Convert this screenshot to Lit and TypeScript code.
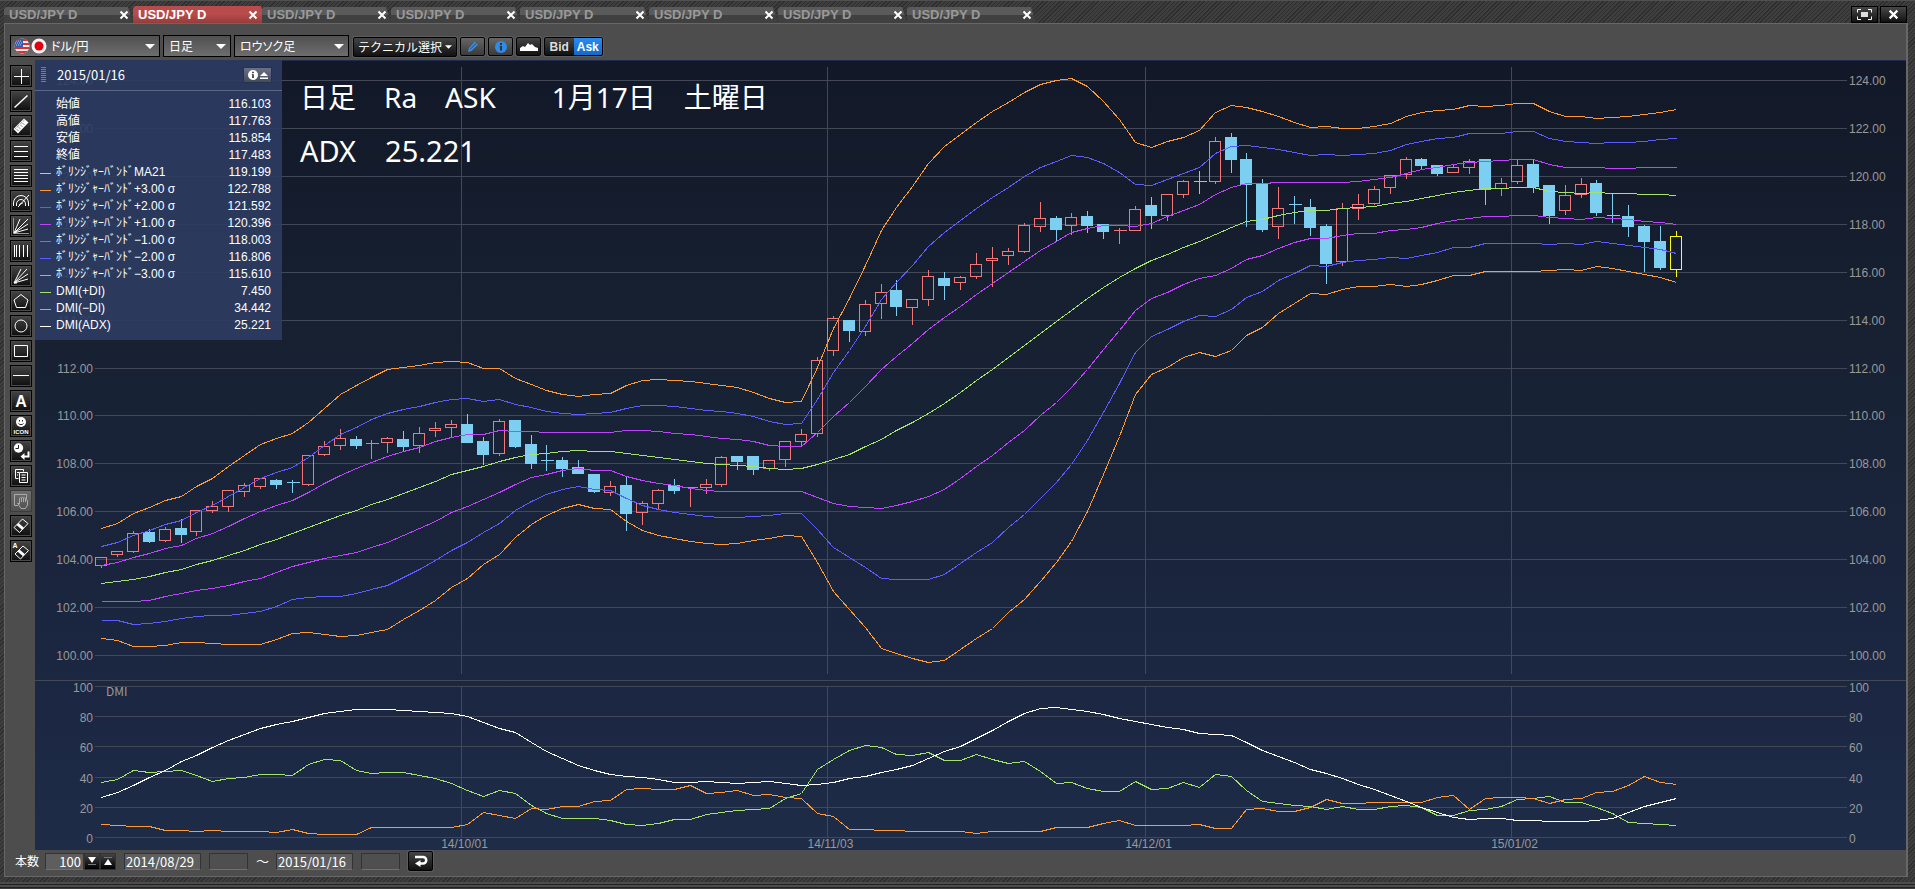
import { LitElement, html, svg, css } from "lit";
import { customElement, state } from "lit/decorators.js";

type Bar = [kind: number, top: number, bottom: number, high: number, low: number];

const UP = 1;
const DOWN = 0;
const shift = (by: number, list: number[]) => list.map((v) => v + by);
const shiftBars = (by: number, list: Bar[]): Bar[] =>
  list.map(([k, t, b, h, l]) => [k, t + by, b + by, h + by, l + by]);

/* Price levels are counted downwards in steps of 2/143.75 yen. */
const LEVEL_TOP = 61;
const LEVEL_SPAN = 1725;

const bars: Bar[] = [
  ...shiftBars(840, [
    [UP, 652, 677, 648, 683], [UP, 634, 644, 630, 650], [UP, 580, 635, 570, 638], [DOWN, 577, 603, 564, 606],
    [UP, 568, 602, 558, 605], [DOWN, 564, 582, 534, 608], [UP, 511, 575, 507, 587], [UP, 499, 512, 480, 518],
    [UP, 451, 500, 447, 513], [UP, 436, 455, 426, 470], [UP, 415, 440, 413, 446], [DOWN, 420, 432, 414, 444],
    [DOWN, 427, 428, 417, 456], [UP, 346, 434, 342, 437], [UP, 319, 344, 300, 347], [UP, 295, 317, 264, 329],
    [DOWN, 297, 315, 285, 324], [UP, 310, 311, 297, 354], [UP, 295, 308, 289, 338], [DOWN, 297, 318, 270, 333],
    [UP, 280, 317, 258, 338], [UP, 265, 272, 243, 290], [UP, 253, 263, 237, 288], [DOWN, 252, 306, 219, 308],
    [DOWN, 303, 342, 288, 372], [UP, 244, 341, 234, 347], [DOWN, 240, 318, 237, 323], [DOWN, 312, 369, 282, 384],
    [DOWN, 360, 361, 312, 390], [DOWN, 360, 384, 348, 408], [DOWN, 381, 399, 357, 399], [DOWN, 402, 453, 399, 458],
    [UP, 439, 458, 420, 467], [DOWN, 435, 519, 407, 570], [UP, 490, 518, 480, 552], [UP, 451, 491, 444, 504],
    [DOWN, 435, 450, 414, 459], [UP, 442, 443, 442, 498], [UP, 433, 443, 414, 459], [UP, 352, 434, 345, 438],
    [DOWN, 348, 363, 348, 387], [DOWN, 348, 387, 348, 402], [UP, 361, 386, 357, 392], [UP, 304, 359, 300, 378],
    [UP, 283, 305, 264, 318], [UP, 61, 281, 48, 288],
  ]),
  [UP, 775, 872, 765, 885], [DOWN, 780, 810, 780, 843], [UP, 733, 815, 717, 825], [UP, 697, 731, 669, 776],
  [DOWN, 690, 738, 657, 765], [UP, 718, 743, 714, 792], [UP, 649, 719, 627, 735], [DOWN, 654, 675, 633, 717],
  [UP, 652, 668, 645, 687], [UP, 613, 650, 576, 656], [UP, 595, 602, 558, 678], [UP, 574, 587, 561, 612],
  [UP, 496, 575, 487, 578], [UP, 475, 500, 423, 513], [DOWN, 474, 507, 465, 540], [UP, 472, 497, 456, 524],
  [DOWN, 468, 495, 450, 516], [DOWN, 492, 513, 492, 534], [UP, 511, 512, 501, 549], [UP, 448, 512, 435, 512],
  [DOWN, 435, 465, 408, 504], [UP, 403, 467, 399, 480], [UP, 364, 404, 357, 413], [DOWN, 364, 365, 330, 399],
  [UP, 244, 365, 228, 371], [DOWN, 231, 297, 216, 336], [DOWN, 297, 372, 276, 498], [DOWN, 370, 507, 354, 513],
  [UP, 445, 500, 378, 534], [DOWN, 433, 434, 405, 489], [DOWN, 441, 501, 414, 525], [DOWN, 498, 609, 489, 669],
  [UP, 445, 605, 426, 615], [UP, 433, 445, 399, 477], [UP, 388, 431, 375, 434], [UP, 346, 383, 342, 399],
  [UP, 298, 344, 288, 354], [DOWN, 297, 315, 291, 328], [DOWN, 315, 339, 312, 345], [UP, 322, 338, 313, 338],
  [UP, 304, 323, 294, 339], [DOWN, 297, 387, 297, 432], [UP, 370, 386, 351, 405], [UP, 316, 365, 294, 369],
  [DOWN, 312, 378, 299, 396], [DOWN, 375, 465, 375, 489], [UP, 406, 452, 372, 462], [UP, 373, 404, 351, 411],
  [DOWN, 369, 456, 357, 465], [DOWN, 466, 467, 399, 486], [DOWN, 468, 498, 432, 528], [DOWN, 498, 543, 492, 633],
  [DOWN, 543, 621, 495, 627], [UP, 529, 629, 510, 648],
];

const average = [
  ...shift(840, [
    730, 725, 719, 710, 698, 688, 674, 662, 647, 630, 614, 597, 580, 562, 543, 526, 511, 494, 478, 460, 443, 424,
    404, 391, 380, 364, 353, 343, 339, 334, 331, 334, 334, 340, 346, 352, 358, 364, 370, 374, 376, 379, 385, 387,
    386, 374, 359, 342, 320, 297, 272, 247,
  ]),
  1059, 1030, 996, 962, 929, 893, 857, 819, 785, 750, 716, 683, 653, 624, 602, 583, 562, 545, 524, 503, 485, 478,
  465, 458, 451, 451, 446, 442, 439, 431, 424, 415, 406, 397, 391, 386, 385, 382, 382, 393, 398, 400, 397, 399,
  401, 403, 404, 407,
];

const upperBand = [
  ...shift(840, [
    565, 550, 520, 501, 481, 468, 440, 415, 380, 346, 314, 296, 281, 248, 204, 162, 136, 112, 89, 83, 76, 68, 65,
    67, 86, 86, 115, 132, 151, 162, 169, 164, 159, 137, 122, 119, 121, 125, 130, 135, 142, 156, 175, 187, 183, 82,
  ]),
  805, 715, 617, 510, 443, 380, 310, 260, 223, 188, 154, 128, 96, 74, 62, 55, 79, 124, 178, 246, 262, 244, 231,
  212, 158, 136, 143, 154, 169, 187, 202, 199, 205, 205, 200, 190, 169, 157, 151, 148, 136, 139, 136, 130, 130,
  154, 169, 169, 175, 173, 169, 163, 157, 148,
];

/* DMI levels: 79 stands for 100, 532 for 0. */
const adx = [
  412, 397, 375, 353, 332, 305, 286, 261, 242, 223, 205, 193, 183, 171, 161, 153, 148, 148, 148, 151, 154, 157, 161,
  170, 188, 205, 218, 246, 275, 295, 316, 330, 342, 349, 352, 358, 366, 368, 365, 368, 370, 367, 364, 369, 376, 373,
  366, 356, 350, 338, 327, 315, 296, 274, 258, 234, 212, 185, 159, 146, 142, 148, 155, 164, 175, 184, 192, 201, 208,
  220, 223, 227, 246, 271, 289, 308, 327, 340, 356, 373, 389, 407, 425, 441, 458, 471, 478, 476, 475, 481, 481, 484,
  484, 484, 481, 474, 456, 439, 427, 415,
];
const plusDi = [
  367, 358, 331, 337, 334, 331, 347, 364, 355, 351, 344, 343, 346, 314, 298, 302, 330, 340, 337, 338, 345, 354, 369,
  391, 409, 391, 401, 436, 459, 475, 475, 475, 481, 493, 496, 491, 479, 478, 464, 458, 452, 448, 444, 416, 400, 329,
  297, 272, 256, 262, 283, 287, 277, 301, 301, 283, 297, 310, 305, 333, 370, 367, 386, 394, 394, 364, 388, 384, 367,
  382, 343, 349, 390, 424, 431, 435, 440, 448, 440, 449, 448, 439, 436, 441, 466, 466, 451, 448, 440, 418, 415, 409,
  427, 427, 442, 459, 487, 490, 493, 496,
];
const minusDi = [
  493, 496, 498, 500, 511, 511, 514, 511, 514, 514, 514, 517, 508, 519, 523, 523, 523, 502, 502, 502, 502, 502, 502,
  493, 457, 466, 475, 445, 448, 440, 439, 424, 421, 388, 386, 388, 388, 376, 400, 397, 390, 406, 403, 412, 416, 459,
  468, 508, 508, 511, 511, 514, 514, 514, 514, 520, 515, 514, 514, 514, 502, 502, 502, 491, 481, 496, 496, 496, 496,
  493, 505, 505, 449, 446, 454, 454, 443, 418, 430, 430, 428, 427, 427, 427, 412, 406, 448, 415, 412, 412, 415, 430,
  418, 415, 398, 393, 376, 349, 366, 373,
];

const months: [index: number, label: string][] = [
  [23, "14/10/01"], [46, "14/11/03"], [66, "14/12/01"], [89, "15/01/02"],
];

const ORANGE = "#ff9933";
const BLUE = "#5c5cff";
const PURPLE = "#c044ff";
const GREEN = "#a3e36a";

@customElement("price-chart")
class PriceChart extends LitElement {
  @state() private w = 1871;
  @state() private h = 790;
  private observer?: ResizeObserver;

  static styles = css`
    :host { display: block; min-width: 0; min-height: 0; overflow: hidden;
      background: linear-gradient(#121828, #172132 35%, #1b2641 75%, #1e2c47); box-shadow: inset 0 1px #1d2c4c; }
    svg { display: block; width: 100%; height: 100%; }
    .lines, .bars { shape-rendering: crispEdges; fill: none; stroke-width: 1; }
    .grid { stroke: #434857; shape-rendering: crispEdges; }
    .axis { fill: #999; font: 12px "Liberation Sans", sans-serif; }
    .end { text-anchor: end; }
    .mid { text-anchor: middle; }
    .title { font-family: "Noto Sans CJK JP", sans-serif; }
    .up { stroke: #f47676; }
    .down { stroke: #7ccff0; }
    .body { fill: #7ccff0; }
    .now { stroke: #ffff00; }
  `;

  connectedCallback() {
    super.connectedCallback();
    this.observer = new ResizeObserver(([entry]) => {
      this.w = Math.round(entry.contentRect.width);
      this.h = Math.round(entry.contentRect.height);
    });
    this.observer.observe(this);
  }

  disconnectedCallback() {
    this.observer?.disconnect();
    super.disconnectedCallback();
  }

  private x = (i: number) => Math.round(66 + (i * (this.w - 296)) / 99) + 0.5;
  private y = (level: number) => Math.floor(20.55 + ((level - LEVEL_TOP) / LEVEL_SPAN) * (this.h - 215)) + 0.5;
  private yd = (level: number) => Math.floor(this.h - 163.5 + ((level - 79) / 453) * 151) + 0.5;

  private line(levels: number[], color: string, scale: (v: number) => number) {
    return svg`<polyline stroke=${color} points=${levels.map((v, i) => `${this.x(i)},${scale(v)}`).join(" ")}></polyline>`;
  }

  private bar([kind, top, bottom, high, low]: Bar, i: number) {
    const x = this.x(i);
    const t = this.y(top);
    const b = this.y(bottom);
    const tone = i === bars.length - 1 ? "now" : kind === UP ? "up" : "down";
    const wicks = `M${x} ${this.y(high)}V${t}M${x} ${b}V${this.y(low) + 0.5}`;
    if (bottom - top < 2) {
      return svg`<path class=${tone} d=${`${wicks}M${x - 6} ${t}h13`}></path>`;
    }
    return svg`<path class=${tone} d=${wicks}></path>
      ${kind === UP
        ? svg`<rect class=${tone} x=${x - 6} y=${t} width="11" height=${b - t}></rect>`
        : svg`<rect class="body" x=${x - 6.5} y=${t - 0.5} width="12" height=${b - t + 1}></rect>`}`;
  }

  render() {
    const { w, h } = this;
    const right = w - 59;
    const band = (k: number) => average.map((m, i) => m + ((upperBand[i] - m) * k) / 3);
    const prices = Array.from({ length: 13 }, (_, i) => 124 - i * 2);
    const steps = [100, 80, 60, 40, 20, 0];
    const priceY = (p: number) => this.y(LEVEL_TOP + ((124 - p) / 24) * LEVEL_SPAN);
    const stepY = (v: number) => this.yd(532 - v * 4.53);
    return html`<svg viewBox="0 0 ${w} ${h}" role="img" aria-label="USD/JPY">
      ${prices.map((p) => svg`
        <path class="grid" d="M60 ${priceY(p)}H${right}"></path>
        <text class="axis end" x="58" y=${priceY(p) + 4.5}>${p.toFixed(2)}</text>
        <text class="axis" x=${right + 2} y=${priceY(p) + 4.5}>${p.toFixed(2)}</text>`)}
      ${steps.map((v) => svg`
        <path class="grid" d="M60 ${stepY(v)}H${right}"></path>
        <text class="axis end" x="58" y=${stepY(v) + 5.5}>${v}</text>
        <text class="axis" x=${right + 2} y=${stepY(v) + 5.5}>${v}</text>`)}
      <path class="grid" d="M0 ${h - 169.5}H${w}"></path>
      ${months.map(([i, label]) => svg`
        <path class="grid" d="M${this.x(i) - 6} 7V${h - 176}M${this.x(i) - 6} ${h - 163}v151"></path>
        <text class="axis mid" x=${this.x(i) - 3} y=${h - 2}>${label}</text>`)}
      <text class="axis title" x="71" y=${h - 154}>DMI</text>
      <g class="bars">${bars.map((b, i) => this.bar(b, i))}</g>
      <g class="lines">
        ${this.line(average, GREEN, this.y)}
        ${this.line(band(3), ORANGE, this.y)}
        ${this.line(band(-3), ORANGE, this.y)}
        ${this.line(band(2), BLUE, this.y)}
        ${this.line(band(-2), BLUE, this.y)}
        ${this.line(band(1), PURPLE, this.y)}
        ${this.line(band(-1), PURPLE, this.y)}
        ${this.line(plusDi, GREEN, this.yd)}
        ${this.line(minusDi, ORANGE, this.yd)}
        ${this.line(adx, "#fff", this.yd)}
      </g>
    </svg>`;
  }
}

const BAND = "ﾎﾞﾘﾝｼﾞｬｰﾊﾞﾝﾄﾞ";
const readings: [label: string, value: string, color: string][] = [
  ["始値", "116.103", "transparent"],
  ["高値", "117.763", "transparent"],
  ["安値", "115.854", "transparent"],
  ["終値", "117.483", "transparent"],
  [`${BAND}MA21`, "119.199", GREEN],
  [`${BAND}+3.00 σ`, "122.788", ORANGE],
  [`${BAND}+2.00 σ`, "121.592", BLUE],
  [`${BAND}+1.00 σ`, "120.396", PURPLE],
  [`${BAND}−1.00 σ`, "118.003", PURPLE],
  [`${BAND}−2.00 σ`, "116.806", BLUE],
  [`${BAND}−3.00 σ`, "115.610", ORANGE],
  ["DMI(+DI)", "7.450", GREEN],
  ["DMI(−DI)", "34.442", ORANGE],
  ["DMI(ADX)", "25.221", "#fff"],
];

const tools: [name: string, icon: unknown][] = [
  ["十字カーソル", svg`<path d="M4 11.5h15M11.5 4v15"/>`],
  ["トレンドライン", svg`<path d="M4.5 17.5l13-12" stroke-width="1.500"/>`],
  ["定規", svg`<path d="M3.500 14L14 3.500l4.500 4L8 18.500z" fill="#fff" stroke="none"/><path d="M7 14.500l1 1M9 12.500l1 1M11 10.500l1 1M13 8.500l1 1" stroke="#222"/><path d="M5.500 13.500L14.500 5" stroke="#555" stroke-dasharray="1 1"/>`],
  ["水平線3本", svg`<path d="M4 6.500h14M4 11.500h14M4 16.500h14"/>`],
  ["水平線5本", svg`<path d="M4 4.500h14M4 7.500h14M4 10.500h14M4 13.500h14M4 16.500h14"/>`],
  ["ファン弧", svg`<path d="M3.500 16v-3a7 7 0 0 1 15 0v3M6.500 16v-2a4.500 4.500 0 0 1 9 0v2M9.500 16v-1a2 2 0 0 1 3-1.500M8 17L19 5"/>`],
  ["ギャンファン", svg`<path d="M3.500 3v15.500H19" stroke="#999"/><path d="M4 18L10 4M4 18L18 4M4 18L18 9M4 18l14-4"/>`],
  ["垂直線", svg`<path d="M4.500 5v12M6.500 5v12M9.500 5v12M13.500 5v12M17.500 5v12"/>`],
  ["スピードライン", svg`<path d="M4 18L11 4M4 18L17 4M4 18l14-9M4 18l14-4M4 18h3"/>`],
  ["五角形", svg`<path d="M11 4.500l7 5.500-2.500 7.500h-9L4 10z"/>`],
  ["円", svg`<circle cx="11" cy="11" r="6"/>`],
  ["四角形", svg`<path d="M4.500 5.500h13v11h-13z"/>`],
  ["水平線", svg`<path d="M3 10.500h16"/>`],
  ["テキスト", svg`<text x="11" y="17" font-size="16" font-weight="bold">A</text>`],
  ["アイコン", svg`<circle cx="11" cy="7" r="5" fill="#fff" stroke="none"/><path d="M9.500 5v1.500M12.500 5v1.500M8.500 8.500c1 1.500 4 1.500 5 0" stroke="#222"/><text x="11" y="19" font-size="6" font-weight="bold">ICON</text>`],
  ["時間戻し", svg`<circle cx="8.500" cy="8" r="4.700" fill="#fff" stroke="none"/><path d="M8.500 5v3.500H5.500" stroke="#222"/><path d="M18.500 11.500v5H12" stroke-width="2"/><path d="M14.500 13l-4 3.500 4 3.500z" fill="#fff" stroke="none"/>`],
  ["複製", svg`<path d="M5.500 4.500h8v2M5.500 4.500v9h3M7 7.500h2M7 10h1M9.500 7.500h8v10h-8zM11.500 10h4M11.500 12.500h4M11.500 15h4"/>`],
  ["移動", svg`<path d="M8 15.500H4.500v-11h12v5M7.500 13l2 1V8.500c0-1 2-1 2 0V12V8c0-1 2-1 2 0v4V8.500c0-1 2-1 2 0V12v-1.500c0-1 2-1 2 0V15l-2 3.500h-4.500z" stroke="#aaa"/>`],
  ["消しゴム", svg`<path d="M4 12.500L12.500 4l5.500 4.500-8.500 9z"/><path d="M6.500 10l5.500 4.800 2-2L8.500 8z" fill="#fff" stroke="none"/>`],
  ["全消去", svg`<path d="M5 14L13 6l5.500 4.500L10.500 19z"/><path d="M7.500 11.500l5.500 4.800 2-2-5.500-4.800z" fill="#fff" stroke="none"/><text x="5" y="8" font-size="7" font-weight="bold">A</text>`],
];

@customElement("app-root")
class AppRoot extends LitElement {
  @state() private active = 1;
  @state() private disabledTool = 17;

  static styles = css`
    :host { display: block; height: 100vh; font: 12px/16px "Liberation Sans", "Noto Sans CJK JP", sans-serif; color: #fff;
      background: #333; }
    * { box-sizing: border-box; }
    button, select, input { font: inherit; color: inherit; margin: 0; padding: 0; border: 0; border-radius: 0; }
    svg { display: block; }
    .window { display: grid; grid-template-rows: 23px 1fr 12px; height: 100%;
      box-shadow: inset 0 1px #505050;
      background: repeating-linear-gradient(135deg, #2e2e2e 0 1px, #3e3e3e 1px 3px); }
    .bar { display: flex; justify-content: space-between; align-items: flex-end; padding: 0 8px 0 4px; }
    .tabs { display: flex; align-items: flex-end; }
    .tab { display: flex; justify-content: space-between; align-items: center; width: 129px; height: 16px;
      padding: 0 4px 0 5px; color: #999; background: linear-gradient(#5a5a5a 50%, #404040 50%);
      clip-path: polygon(0 2px, 2px 0, calc(100% - 5px) 0, 100% 100%, 0 100%); }
    .tab.on { width: 133px; height: 17px; margin-right: -4px; padding-right: 8px; color: #fff; position: relative;
      background: linear-gradient(#b84b4b 50%, #963c3c); }
    .tab button { background: none; line-height: 16px; cursor: pointer; }
    .name { font-size: 13px; font-weight: bold; }
    .shut { width: 10px; color: #fff; }
    .wins { display: flex; gap: 2px; }
    .win { display: grid; place-items: center; width: 27px; height: 17px; border: 1px solid #000;
      background: linear-gradient(#484848, #111); }
    .panel { display: grid; grid-template: 36px 1fr 26px / 30px 1fr; min-height: 0; margin: 0 7px 0 4px;
      background: #4d4d4d; border: solid #676767; border-width: 1px 2px 1px 1px; }
    .toolbar { grid-column: 1 / -1; display: flex; align-items: center; gap: 3px; padding: 8px 5px 0; }
    .pick { position: relative; }
    .pick select { appearance: none; width: 100%; height: 22px; padding: 0 18px 0 5px; border: 1px solid #000;
      background: linear-gradient(#505050, #6e6e6e); font: 12px/20px "Noto Sans CJK JP", sans-serif;
      font-feature-settings: "palt"; }
    .pick .caret { position: absolute; right: 5px; top: 9px; pointer-events: none; }
    .pair { width: 150px; }
    .pair select { padding-left: 40px; }
    .flags { position: absolute; left: 4px; top: 3px; pointer-events: none; }
    .span { width: 68px; }
    .kind { width: 115px; }
    .tech { display: flex; align-items: center; justify-content: center; gap: 3px; width: 104px; height: 20px;
      margin: 1px 0 0 1px; font: 12px/18px "Noto Sans CJK JP", sans-serif; }
    .dark { border: 1px solid #000; border-radius: 2px; background: linear-gradient(#444, #111);
      box-shadow: 0 0 0 1px #5c5c5c; }
    .small { display: grid; place-items: center; width: 25px; height: 19px; margin-top: 1px; }
    .soft { background: linear-gradient(#666, #3a3a3a); }
    .quote { display: flex; width: 59px; height: 19px; margin-top: 1px; overflow: hidden; font-weight: bold; }
    .quote button { flex: 1; background: none; color: #ddd; }
    .quote .ask { background: linear-gradient(#2a8af0, #1668c8); color: #fff; }
    .side { display: flex; flex-direction: column; align-items: flex-start; gap: 3px; padding: 5px 0 0 5px; }
    .tool { width: 22px; height: 22px; flex: none; border: 1px solid #000; background: linear-gradient(#444, #0e0e0e);
      box-shadow: inset 0 0 0 1px #4a4a4a; }
    .tool:disabled { border-color: #3c3c3c; background: linear-gradient(#6e6e6e, #505050); box-shadow: none; }
    .tool svg { margin: -1px; fill: none; stroke: #fff; }
    .tool text { fill: #fff; stroke: none; text-anchor: middle; font-family: "Liberation Sans", sans-serif; }
    .stage { position: relative; display: grid; min-width: 0; min-height: 0; }
    .info { position: absolute; left: 0; top: 0; width: 247px; padding-bottom: 6px; background: rgba(44, 60, 98, 0.9); }
    .head { display: flex; align-items: center; gap: 11px; height: 31px; padding: 0 10px 0 6px;
      border-bottom: 1px solid #5c6786; }
    .grip { width: 5px; height: 16px; background: repeating-linear-gradient(#8890a6 0 1px, transparent 1px 2px);
      opacity: 0.8; }
    .day { flex: 1; font: 13px/16px "Noto Sans CJK JP", sans-serif; }
    .fold { display: flex; align-items: center; justify-content: center; gap: 2px; width: 29px; height: 16px;
      border: 1px solid #2a3247; background: linear-gradient(#6a7184, #434b62); }
    table { width: 100%; margin-top: 5px; border-collapse: collapse; font: 12px/17px "Liberation Sans", "Noto Sans CJK JP", sans-serif; }
    th, td { height: 17px; padding: 0; font-weight: normal; text-align: left; white-space: nowrap; line-height: 17px; }
    td { padding-right: 11px; text-align: right; }
    .key { display: flex; align-items: center; gap: 5px; height: 17px; padding-left: 5px; }
    .dash { width: 11px; height: 1px; margin-top: 2px; }
    .note { position: absolute; left: 265px; top: 11px; white-space: pre;
      font: 28px/53px "Noto Sans", "Noto Sans CJK JP", sans-serif; }
    .note p { margin: 0; }
    .note .reading { font-size: 29px; }
    .foot { grid-column: 1 / -1; display: flex; align-items: center; padding: 0 0 4px 10px; gap: 8px;
      font: 13px/16px "Noto Sans CJK JP", sans-serif; }
    .foot label { font-size: 12px; }
    .foot input { height: 17px; width: 77px; padding: 0 2px 0 1px; background: #5e5e5e;
      border: 1px solid #333; border-bottom-color: #707070; }
    .foot .slot { width: 39px; background: #4f4f4f; }
    .count { display: flex; margin-left: -2px; }
    .foot .count input { width: 39px; text-align: right; }
    .step { display: grid; place-items: center; width: 16px; height: 17px; border: 1px solid #333;
      background: linear-gradient(#444, #000); }
    .back { display: grid; place-items: center; width: 25px; height: 20px; }
    .tilde { width: 12px; text-align: center; }
    .base { background: linear-gradient(transparent 5px, #4c4c4c 5px 7px, #222 7px 8px, #4c4c4c 8px 10px, #222 10px 11px, #3c3c3c 11px); }
  `;

  private caret(width = 10) {
    return html`<svg class="caret" width=${width} height="5" viewBox="0 0 10 5"><path d="M0 0h10L5 5z" fill="#fff"></path></svg>`;
  }

  private cross(size = 10) {
    return html`<svg width=${size} height=${size} viewBox="0 0 10 10"><path d="M1.500 1.500l7 7M8.500 1.500l-7 7" stroke="#fff" stroke-width="2"></path></svg>`;
  }

  render() {
    return html`
      <div class="window">
        <div class="bar">
          <div class="tabs">
            ${Array.from({ length: 8 }, (_, i) => html`
              <div class="tab ${i === this.active ? "on" : ""}">
                <button class="name" @click=${() => (this.active = i)}>USD/JPY D</button>
                <button class="shut" aria-label="閉じる">${this.cross()}</button>
              </div>`)}
          </div>
          <div class="wins">
            <button class="win" aria-label="最大化"><svg width="15" height="11" viewBox="0 0 15 11"><path d="M.5 3.500V.5H4M11 .5h3.500v3M14.500 7.500v3H11M4 10.500H.5v-3" fill="none" stroke="#fff"></path><path d="M4 3h7v5H4z" fill="#ddd"></path></svg></button>
            <button class="win" aria-label="閉じる">${this.cross(11)}</button>
          </div>
        </div>

        <div class="panel">
          <div class="toolbar">
            <div class="pick pair">
              <select aria-label="通貨ペア"><option>ドル/円</option></select>
              <svg class="flags" width="34" height="16" viewBox="0 0 34 16">
                <defs><clipPath id="disc"><circle cx="8" cy="8" r="7.500"></circle></clipPath></defs>
                <g clip-path="url(#disc)">
                  <path d="M0 0h16v16H0z" fill="#eee"></path>
                  <path d="M0 2h16M0 6h16M0 10h16M0 14h16" stroke="#d83030" stroke-width="2"></path>
                  <path d="M0 0h9v9H0z" fill="#3a5aa8"></path>
                  <path d="M2 3h6M1 5h7M2 7h6" stroke="#b8c8ee" stroke-dasharray="1 1"></path>
                </g>
                <circle cx="25" cy="8" r="7.500" fill="#f4f4f4"></circle>
                <circle cx="25" cy="8" r="4.500" fill="#e00010"></circle>
              </svg>
              ${this.caret()}
            </div>
            <div class="pick span"><select aria-label="足種"><option>日足</option></select>${this.caret()}</div>
            <div class="pick kind"><select aria-label="チャート種別"><option>ロウソク足</option></select>${this.caret()}</div>
            <button class="tech dark">テクニカル選択 <svg width="7" height="4" viewBox="0 0 10 5"><path d="M0 0h10L5 5z" fill="#fff"></path></svg></button>
            <button class="small dark soft" aria-label="描画"><svg width="14" height="14" viewBox="0 0 14 14"><path d="M2 12l1-4 6-6.500 3 3L5.500 11z" fill="#3a8ee0"></path><path d="M4 9.500L10.500 3" stroke="#1a4a88"></path></svg></button>
            <button class="small dark soft" aria-label="情報"><svg width="12" height="12" viewBox="0 0 12 12"><circle cx="6" cy="6" r="6" fill="#2f8ae8"></circle><path d="M5 2h2v2H5zM4.500 5H7v4.500H5V6h-.5z" fill="#333"></path></svg></button>
            <button class="small dark" aria-label="エリア"><svg width="18" height="9" viewBox="0 0 18 9"><path d="M0 9V6l3-2 2 1 3-4 2 2 2-1 3 3 3 1v3z" fill="#fff"></path></svg></button>
            <div class="quote dark"><button>Bid</button><button class="ask">Ask</button></div>
          </div>

          <div class="side">
            ${tools.map(([name, icon], i) => html`
              <button class="tool" aria-label=${name} ?disabled=${i === this.disabledTool}>
                <svg width="22" height="22" viewBox="0 0 22 22">${icon}</svg>
              </button>`)}
          </div>

          <div class="stage">
            <price-chart></price-chart>
            <div class="note"><p>日足　Ra　ASK　　1月17日　土曜日</p><p class="reading">ADX　25.221</p></div>
            <div class="info">
              <div class="head">
                <span class="grip"></span>
                <span class="day">2015/01/16</span>
                <button class="fold" aria-label="折りたたむ">
                  <svg width="10" height="10" viewBox="0 0 12 12"><circle cx="6" cy="6" r="6" fill="#fff"></circle><path d="M5 2h2v2H5zM4.500 5H7v4.500H5V6h-.5z" fill="#333"></path></svg>
                  <svg width="8" height="7" viewBox="0 0 8 7"><path d="M4 0l4 4H0zM0 5.500h8V7H0z" fill="#fff"></path></svg>
                </button>
              </div>
              <table>
                ${readings.map(([label, value, color]) => html`
                  <tr>
                    <th scope="row"><div class="key"><span class="dash" style="background:${color}"></span>${label}</div></th>
                    <td>${value}</td>
                  </tr>`)}
              </table>
            </div>
          </div>

          <div class="foot">
            <label for="count">本数</label>
            <div class="count">
              <input id="count" value="100" />
              <button class="step" aria-label="減らす"><svg width="10" height="10" viewBox="0 0 10 10"><path d="M1 1h8L5 7z" fill="#fff"></path><path d="M1 8.500h8" stroke="#777"></path></svg></button>
              <button class="step" aria-label="増やす"><svg width="10" height="10" viewBox="0 0 10 10"><path d="M1 9h8L5 3z" fill="#fff"></path><path d="M1 1.500h8" stroke="#777"></path></svg></button>
            </div>
            <input aria-label="開始日" value="2014/08/29" />
            <input class="slot" aria-label="開始時刻" />
            <span class="tilde">～</span>
            <input aria-label="終了日" value="2015/01/16" />
            <input class="slot" aria-label="終了時刻" />
            <button class="back dark" aria-label="更新"><svg width="14" height="12" viewBox="0 0 14 12"><path d="M1 2h8a3 3 0 0 1 0 6.500H6" fill="none" stroke="#fff" stroke-width="2.500"></path><path d="M6.500 5v7L1 8.500z" fill="#fff"></path></svg></button>
          </div>
        </div>
        <div class="base"></div>
      </div>
    `;
  }
}
